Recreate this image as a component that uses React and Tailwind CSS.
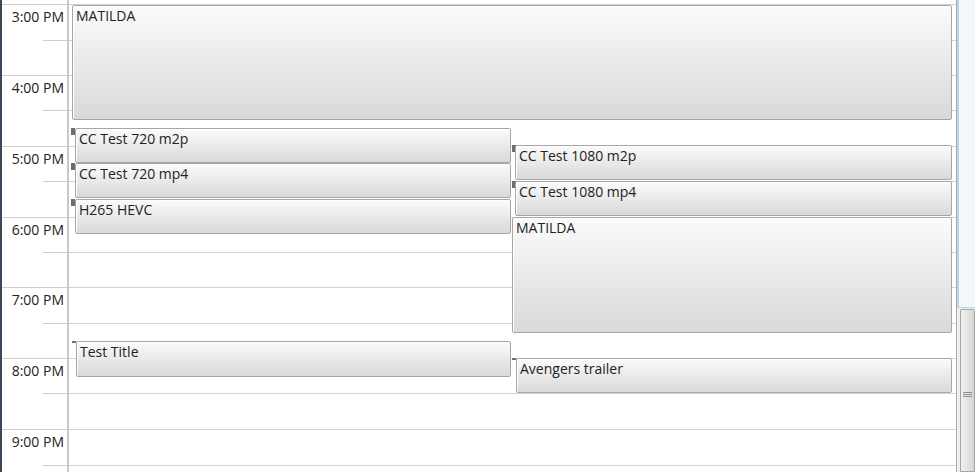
const SLOTS = [
  { top: 4, h: 'h-[36px]', label: '3:00 PM', hour: true },
  { top: 40, h: 'h-[35px]', hour: false },
  { top: 75, h: 'h-[35px]', label: '4:00 PM', hour: true },
  { top: 110, h: 'h-[36px]', hour: false },
  { top: 146, h: 'h-[35px]', label: '5:00 PM', hour: true },
  { top: 181, h: 'h-[36px]', hour: false },
  { top: 217, h: 'h-[35px]', label: '6:00 PM', hour: true },
  { top: 252, h: 'h-[35px]', hour: false },
  { top: 287, h: 'h-[36px]', label: '7:00 PM', hour: true },
  { top: 323, h: 'h-[35px]', hour: false },
  { top: 358, h: 'h-[35px]', label: '8:00 PM', hour: true },
  { top: 393, h: 'h-[36px]', hour: false },
  { top: 429, h: 'h-[36px]', label: '9:00 PM', hour: true },
  { top: 465, h: 'h-[36px]', hour: false },
];

// event boxes, coords relative to the event canvas (which starts at x=69)
const EVENTS = [
  { title: 'MATILDA', cls: 'left-[3px] top-[5px] w-[880px] h-[115px]' },
  { title: 'CC Test 720 m2p', cls: 'left-[6px] top-[128px] w-[436px] h-[35px]', marker: 'left-[2px] top-[128px] h-[7px]' },
  { title: 'CC Test 720 mp4', cls: 'left-[6px] top-[163px] w-[436px] h-[35px]', marker: 'left-[2px] top-[163px] h-[7px]' },
  { title: 'H265 HEVC', cls: 'left-[6px] top-[199px] w-[436px] h-[35px]', marker: 'left-[2px] top-[199px] h-[7px]' },
  { title: 'CC Test 1080 m2p', cls: 'left-[446px] top-[145px] w-[437px] h-[35px]', marker: 'left-[443px] top-[145px] h-[7px]' },
  { title: 'CC Test 1080 mp4', cls: 'left-[446px] top-[181px] w-[437px] h-[35px]', marker: 'left-[443px] top-[181px] h-[7px]' },
  { title: 'MATILDA', cls: 'left-[443px] top-[217px] w-[440px] h-[116px]' },
  { title: 'Test Title', cls: 'left-[7px] top-[341px] w-[435px] h-[36px]', marker: 'left-[3px] top-[341px] h-[2px]' },
  { title: 'Avengers trailer', cls: 'left-[447px] top-[358px] w-[436px] h-[35px]', marker: 'left-[443px] top-[358px] h-[2px]' },
];

function EventBox({ title, cls }) {
  return (
    <div className={`absolute ${cls} rounded-[2px] border border-[#a6a6a6] bg-gradient-to-b from-[#fbfbfb] to-[#d9d9d9] shadow-[inset_1px_1px_0_#ffffff] px-[3px] pt-[1px] text-[14px] leading-[18px] text-[#222] overflow-hidden whitespace-nowrap`}>
      {title}
    </div>
  );
}

export default function App() {
  return (
    <div className="w-[975px] h-[472px] overflow-hidden flex bg-white font-['Open_Sans',sans-serif]">
      <div className="w-[2px] shrink-0 bg-[#3a4756]" />

      {/* time ruler */}
      <div className="w-[67px] shrink-0 border-r-2 border-[#c9c9c9] flex flex-col">
        <div className="h-[4px] shrink-0" />
        {SLOTS.map((s) => (
          <div key={s.top} className={`${s.h} shrink-0`}>
            {s.hour ? (
              <div className="border-t border-[#cfcfcf] h-full pt-[3px] pr-[3px] text-right text-[14px] leading-[18px] text-[#222]">
                {s.label}
              </div>
            ) : (
              <div className="ml-[41px] border-t border-[#cfcfcf]" />
            )}
          </div>
        ))}
      </div>

      {/* day canvas */}
      <div className="relative w-[888px] shrink-0 border-r border-[#a9a9a9]">
        <div className="flex flex-col">
          <div className="h-[4px] shrink-0" />
          {SLOTS.map((s) => (
            <div key={s.top} className={`${s.h} shrink-0 border-t border-[#d3d3d3]`} />
          ))}
        </div>
        {EVENTS.map((e, i) => (
          <div key={i}>
            {e.marker && <div className={`absolute ${e.marker} w-[4px] bg-[#6e6e6e]`} />}
            <EventBox title={e.title} cls={e.cls} />
          </div>
        ))}
      </div>

      {/* scrollbar */}
      <div className="w-[18px] shrink-0 flex flex-col bg-[#efefef]">
        <div className="h-[308px] shrink-0 bg-[#f5f8fb] border-l-2 border-b border-[#bcd4e6]" />
        <div className="mt-[1px] flex-1 ml-[3px] rounded-t-[2px] border border-[#a4a4a4] bg-gradient-to-r from-[#f1f1f1] to-[#d5d5d5] flex flex-col items-center pt-[82px]">
          <div className="w-[9px] flex flex-col gap-[1px]">
            <div className="h-[1px] bg-[#8f8f8f]" />
            <div className="h-[1px] bg-[#8f8f8f]" />
            <div className="h-[1px] bg-[#8f8f8f]" />
          </div>
        </div>
      </div>
    </div>
  );
}
